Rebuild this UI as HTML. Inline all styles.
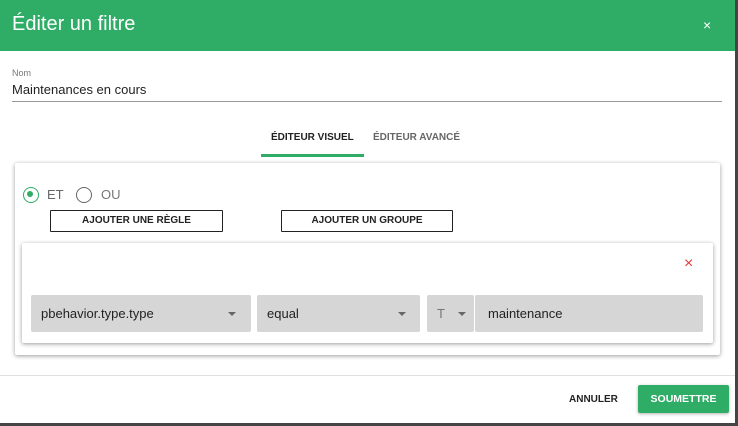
<!DOCTYPE html>
<html><head><style>
*{box-sizing:border-box;margin:0;padding:0}
body{width:738px;height:426px;background:#fff;font-family:"Liberation Sans",sans-serif;position:relative;overflow:hidden;color:#222}
.a{position:absolute}
.hdr{left:0;top:0;width:735px;height:51px;background:#2fac66;color:#fff}
.btn{border:1px solid #222;font-size:10px;font-weight:bold;text-align:center;line-height:20px;color:#222;border-radius:1px}
.fld{background:#d6d6d6;border-radius:2px;height:37px;font-size:13px;line-height:37px;color:#222}
.car{width:0;height:0;border-left:4px solid transparent;border-right:4px solid transparent;border-top:4px solid #666}
</style></head><body>
<div class="a hdr"><div class="a" style="left:12px;top:13px;font-size:20px;">Éditer un filtre</div><div class="a" style="left:703px;top:17px;font-size:14px">×</div></div>
<div class="a" style="left:735px;top:0;width:3px;height:426px;background:#444"></div>
<div class="a" style="left:0;top:423px;width:738px;height:3px;background:#444"></div>
<div class="a" style="left:12px;top:68px;font-size:9px;color:#777">Nom</div>
<div class="a" style="left:12px;top:82px;font-size:13px;color:#222">Maintenances en cours</div>
<div class="a" style="left:12px;top:101px;width:710px;height:1px;background:#999"></div>
<div class="a" style="left:271px;top:132px;font-size:10px;font-weight:bold;color:#222">ÉDITEUR VISUEL</div>
<div class="a" style="left:373px;top:132px;font-size:10px;font-weight:bold;color:#666">ÉDITEUR AVANCÉ</div>
<div class="a" style="left:261px;top:154px;width:103px;height:3px;background:#2fac66"></div>
<div class="a" style="left:15px;top:163px;width:705px;height:192px;box-shadow:0 1px 4px rgba(0,0,0,.4);border-radius:2px"></div>
<div class="a" style="left:23px;top:187px;width:16px;height:16px;border:1.6px solid #2fac66;border-radius:50%"><div class="a" style="left:3.4px;top:3.4px;width:6px;height:6px;border-radius:50%;background:#2fac66"></div></div>
<div class="a" style="left:47px;top:187px;font-size:13px;color:#666">ET</div>
<div class="a" style="left:76px;top:187px;width:16px;height:16px;border:1.6px solid #666;border-radius:50%"></div>
<div class="a" style="left:101px;top:187px;font-size:13px;color:#777">OU</div>
<div class="a btn" style="left:50px;top:210px;width:173px;height:22px">AJOUTER UNE RÈGLE</div>
<div class="a btn" style="left:281px;top:210px;width:172px;height:22px">AJOUTER UN GROUPE</div>
<div class="a" style="left:22px;top:243px;width:691px;height:100px;box-shadow:0 1px 4px rgba(0,0,0,.4);border-radius:2px"></div>
<div class="a" style="left:684px;top:255px;font-size:16px;color:#e53935">×</div>
<div class="a fld" style="left:31px;top:295px;width:220px;padding-left:10px">pbehavior.type.type<div class="a car" style="left:197px;top:17px"></div></div>
<div class="a fld" style="left:257px;top:295px;width:163px;padding-left:10px">equal<div class="a car" style="left:141px;top:17px"></div></div>
<div class="a fld" style="left:427px;top:295px;width:47px;padding-left:10px;color:#777">T<div class="a car" style="left:31px;top:17px"></div></div>
<div class="a fld" style="left:475px;top:295px;width:228px;padding-left:13px">maintenance</div>
<div class="a" style="left:0;top:375px;width:735px;height:1px;background:#e0e0e0"></div>
<div class="a" style="left:569px;top:394px;font-size:10px;font-weight:bold;color:#222">ANNULER</div>
<div class="a" style="left:638px;top:385px;width:91px;height:28px;background:#2fac66;color:#fff;font-size:10.5px;font-weight:bold;text-align:center;line-height:28px;border-radius:2px;box-shadow:0 1px 3px rgba(0,0,0,.3)">SOUMETTRE</div>
</body></html>
